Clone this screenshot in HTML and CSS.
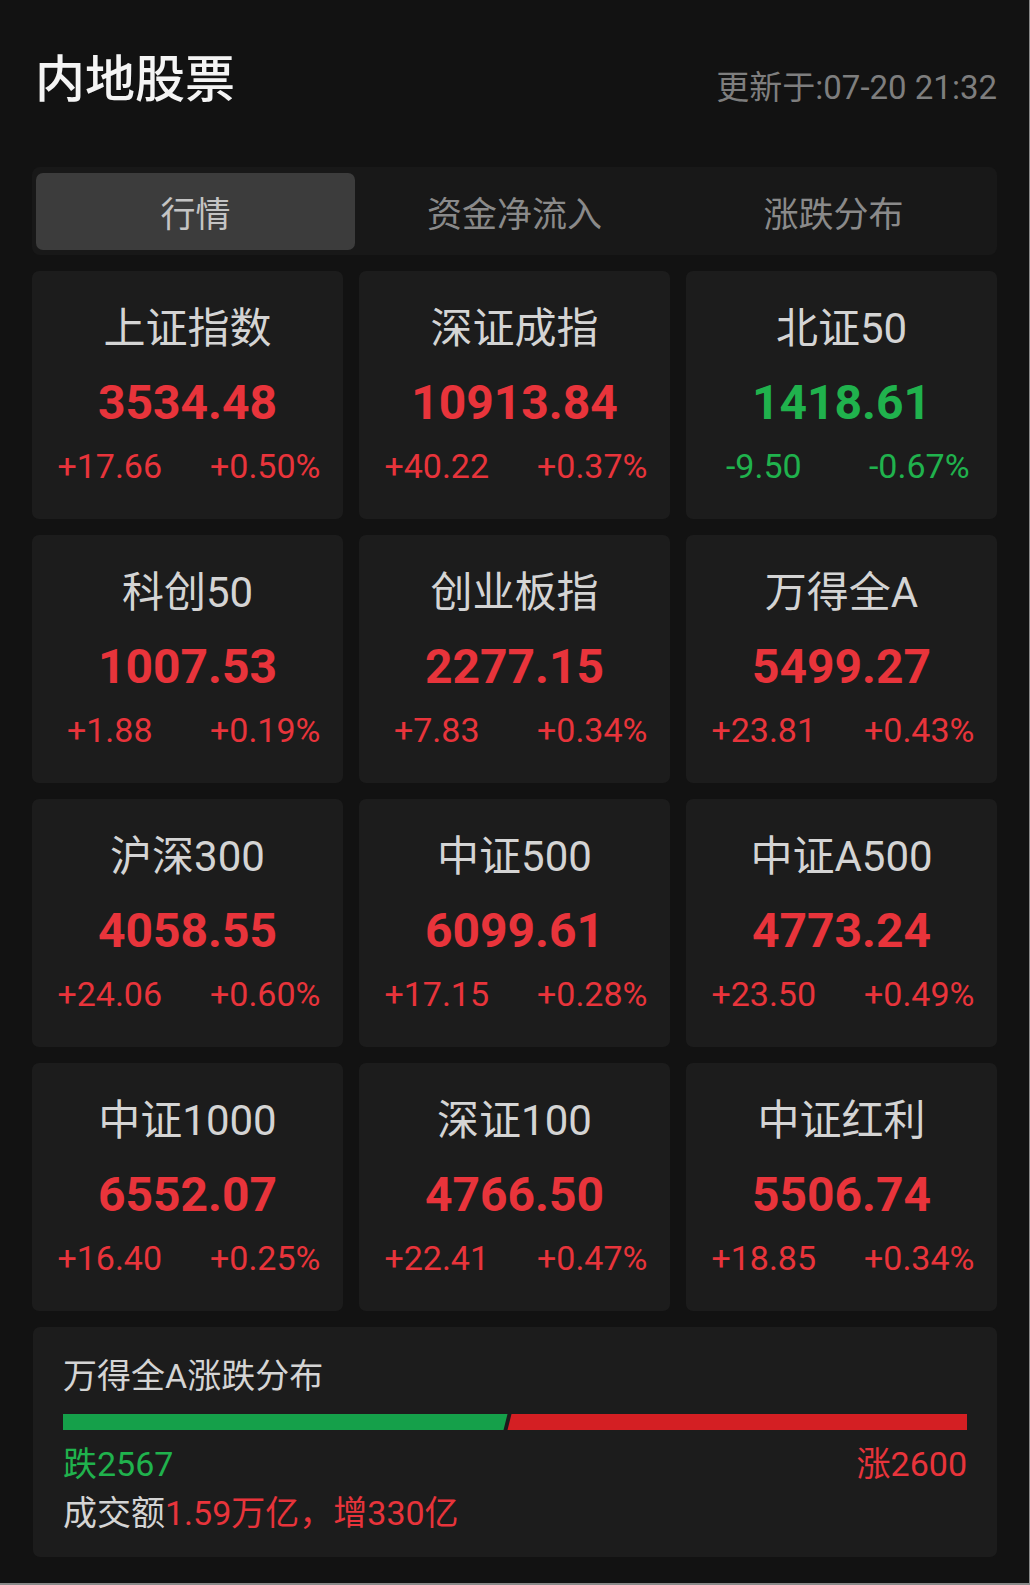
FILE: index.html
```html
<!DOCTYPE html>
<html lang="zh-CN">
<head>
<meta charset="utf-8">
<title>内地股票</title>
<link rel="stylesheet" href="styles.css">
</head>
<body>
<div class="page">
  <header class="header">
    <h1 class="title">内地股票</h1>
    <div class="updated">更新于:07-20 21:32</div>
  </header>

  <nav class="tabs">
    <div class="tab active">行情</div>
    <div class="tab">资金净流入</div>
    <div class="tab">涨跌分布</div>
  </nav>

  <section class="grid">
    <div class="card">
      <div class="name">上证指数</div>
      <div class="value up">3534.48</div>
      <div class="changes up"><span>+17.66</span><span>+0.50%</span></div>
    </div>
    <div class="card">
      <div class="name">深证成指</div>
      <div class="value up">10913.84</div>
      <div class="changes up"><span>+40.22</span><span>+0.37%</span></div>
    </div>
    <div class="card">
      <div class="name">北证50</div>
      <div class="value down">1418.61</div>
      <div class="changes down"><span>-9.50</span><span>-0.67%</span></div>
    </div>

    <div class="card">
      <div class="name">科创50</div>
      <div class="value up">1007.53</div>
      <div class="changes up"><span>+1.88</span><span>+0.19%</span></div>
    </div>
    <div class="card">
      <div class="name">创业板指</div>
      <div class="value up">2277.15</div>
      <div class="changes up"><span>+7.83</span><span>+0.34%</span></div>
    </div>
    <div class="card">
      <div class="name">万得全A</div>
      <div class="value up">5499.27</div>
      <div class="changes up"><span>+23.81</span><span>+0.43%</span></div>
    </div>

    <div class="card">
      <div class="name">沪深300</div>
      <div class="value up">4058.55</div>
      <div class="changes up"><span>+24.06</span><span>+0.60%</span></div>
    </div>
    <div class="card">
      <div class="name">中证500</div>
      <div class="value up">6099.61</div>
      <div class="changes up"><span>+17.15</span><span>+0.28%</span></div>
    </div>
    <div class="card">
      <div class="name">中证A500</div>
      <div class="value up">4773.24</div>
      <div class="changes up"><span>+23.50</span><span>+0.49%</span></div>
    </div>

    <div class="card">
      <div class="name">中证1000</div>
      <div class="value up">6552.07</div>
      <div class="changes up"><span>+16.40</span><span>+0.25%</span></div>
    </div>
    <div class="card">
      <div class="name">深证100</div>
      <div class="value up">4766.50</div>
      <div class="changes up"><span>+22.41</span><span>+0.47%</span></div>
    </div>
    <div class="card">
      <div class="name">中证红利</div>
      <div class="value up">5506.74</div>
      <div class="changes up"><span>+18.85</span><span>+0.34%</span></div>
    </div>
  </section>

  <section class="dist">
    <div class="dist-title">万得全A涨跌分布</div>
    <svg class="bar" viewBox="0 0 905 16" preserveAspectRatio="none">
      <polygon points="0,0 445,0 441,16 0,16" fill="#15a04a"/>
      <polygon points="449,0 905,0 905,16 445,16" fill="#d41f23"/>
    </svg>
    <div class="counts">
      <span class="down">跌2567</span>
      <span class="up">涨2600</span>
    </div>
    <div class="turnover">成交额<span class="up">1.59万亿，增330亿</span></div>
  </section>
</div>
</body>
</html>
```

FILE: styles.css
```css
html {
  background: #8a8a8a;
}

body {
  margin: 0 1px 0 0;
  background: #121212;
  height: 1583px;
  font-family: Roboto, "Noto Sans CJK SC", "Noto Sans", sans-serif;
  color: #d2d2d2;
}

.page {
  padding: 0 32px 0 32px;
}

.header {
  display: flex;
  justify-content: space-between;
  align-items: flex-start;
  padding: 50px 0 0 3px;
}

.title {
  margin: 0;
  font-family: "Noto Sans CJK SC", sans-serif;
  font-size: 50px;
  line-height: 50px;
  font-weight: 500;
  color: #f4f4f4;
}

.updated {
  margin-top: 22px;
  font-size: 33px;
  line-height: 32px;
  color: #7e7e7e;
}

.tabs {
  margin-top: 63px;
  display: grid;
  grid-template-columns: repeat(3, 1fr);
  height: 88px;
  box-sizing: border-box;
  padding: 6px 4px 5px;
  background: #181818;
  border-radius: 8px;
}

.tab {
  display: flex;
  align-items: center;
  justify-content: center;
  font-family: "Noto Sans CJK SC", sans-serif;
  font-size: 35px;
  color: #8a8a8a;
  border-radius: 7px;
}

.tab.active {
  background: #3c3c3c;
  color: #c4c4c4;
}

.grid {
  margin-top: 16px;
  display: grid;
  grid-template-columns: repeat(3, 1fr);
  grid-auto-rows: 248px;
  gap: 16px;
}

.card {
  background: #1c1c1c;
  border-radius: 7px;
  padding-top: 33px;
  box-sizing: border-box;
  display: flex;
  flex-direction: column;
  align-items: stretch;
}

.name {
  text-align: center;
  font-size: 42px;
  line-height: 50px;
  color: #d4d4d4;
}

.value {
  margin-top: 19px;
  text-align: center;
  font-size: 48px;
  line-height: 60px;
  font-weight: 700;
}

.changes {
  margin-top: 13px;
  display: grid;
  grid-template-columns: 1fr 1fr;
  font-size: 34px;
  line-height: 40px;
  text-align: center;
}

.up {
  color: #e8343b;
}

.down {
  color: #20b24d;
}

.dist {
  margin-top: 16px;
  margin-left: 1px;
  background: #1c1c1c;
  border-radius: 7px;
  padding: 29px 30px 24px;
}

.dist-title {
  font-size: 34px;
  line-height: 40px;
  color: #d4d4d4;
}

.bar {
  display: block;
  margin-top: 18px;
  width: 100%;
  height: 16px;
}

.counts {
  margin-top: 14px;
  display: flex;
  justify-content: space-between;
  font-size: 34px;
  line-height: 40px;
}

.turnover {
  margin-top: 9px;
  font-size: 34px;
  line-height: 40px;
  color: #d4d4d4;
}
```
